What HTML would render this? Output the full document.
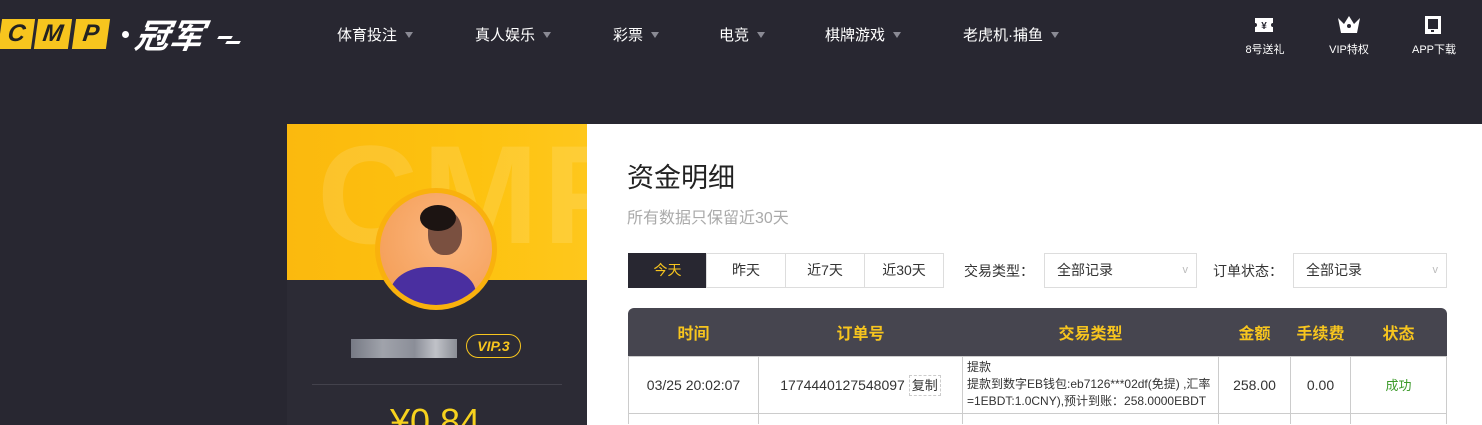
<!DOCTYPE html>
<html><head><meta charset="utf-8"><style>
*{margin:0;padding:0;box-sizing:border-box}
html,body{width:1482px;height:425px;overflow:hidden}
body{background:#282731;font-family:"Liberation Sans","Noto Sans CJK SC",sans-serif;position:relative}
.a{position:absolute}
.nav{color:#fff;font-size:15px;top:24px;white-space:nowrap}
.nav i{display:inline-block;width:0;height:0;border-left:4px solid transparent;border-right:4px solid transparent;border-top:6px solid #8a8a94;margin-left:8px;vertical-align:2px}
.ic{color:#fff;font-size:11px;top:41px;text-align:center;width:60px}
.tab{top:253px;height:35px;border:1px solid #ddd;background:#fff;font-size:14px;color:#333;text-align:center;line-height:33px}
.sel{top:253px;height:35px;border:1px solid #ddd;font-size:14px;color:#333;line-height:33px;padding-left:12px}
.sel:after{content:"v";position:absolute;right:8px;color:#bbb;font-size:11px}
table{position:absolute;left:628px;top:308px;width:819px;border-collapse:collapse;font-size:14px;color:#333}
th{color:#f7c51e;height:48px;font-size:16px;font-weight:bold}
td{border:1px solid #ccc;text-align:center;height:57px}
.clip{position:absolute;left:0;top:0;width:1482px;height:425px;overflow:hidden}
</style></head><body><div class="clip">
<div class="a" style="left:0;top:19px;width:33px;height:30px;background:#f7c51e;transform:skewX(-8deg);font:italic bold 24px 'Liberation Sans';color:#222;text-align:center;line-height:30px">C</div>
<div class="a" style="left:36px;top:19px;width:34px;height:30px;background:#f7c51e;transform:skewX(-8deg);font:italic bold 24px 'Liberation Sans';color:#222;text-align:center;line-height:30px">M</div>
<div class="a" style="left:74px;top:19px;width:34px;height:30px;background:#f7c51e;transform:skewX(-8deg);font:italic bold 24px 'Liberation Sans';color:#222;text-align:center;line-height:30px">P</div>
<div class="a" style="left:122px;top:31px;width:7px;height:7px;border-radius:50%;background:#fff"></div>
<div class="a" style="left:136px;top:14px;color:#fff;font:italic bold 34px 'Noto Sans CJK SC',sans-serif;line-height:40px;transform:skewX(-10deg)">冠军</div>
<div class="a" style="left:218px;top:36px;width:14px;height:3px;background:#fff;transform:skewX(-30deg)"></div>
<div class="a" style="left:226px;top:41px;width:14px;height:3px;background:#fff;transform:skewX(-30deg)"></div>
<div class="a nav" style="left:337px">体育投注<i></i></div>
<div class="a nav" style="left:475px">真人娱乐<i></i></div>
<div class="a nav" style="left:613px">彩票<i></i></div>
<div class="a nav" style="left:719px">电竞<i></i></div>
<div class="a nav" style="left:825px">棋牌游戏<i></i></div>
<div class="a nav" style="left:963px">老虎机·捕鱼<i></i></div>
<svg class="a" style="left:1254px;top:16px" width="20" height="18"><path d="M1 2h18v5a2 2 0 0 0 0 4v5H1v-5a2 2 0 0 0 0-4z" fill="#fff"/><text x="10" y="13" font-size="10" text-anchor="middle" fill="#282731" font-weight="bold">¥</text></svg>
<svg class="a" style="left:1336px;top:14px" width="26" height="20"><path d="M2 4l6 6 5-8 5 8 6-6-3 15H5z" fill="#fff"/><circle cx="13" cy="12" r="2" fill="#282731"/></svg>
<svg class="a" style="left:1424px;top:15px" width="18" height="20"><rect x="1" y="1" width="16" height="18" fill="#fff"/><rect x="4" y="4" width="10" height="10" fill="#282731"/><rect x="7" y="15" width="3" height="2" fill="#282731"/></svg>
<div class="a ic" style="left:1235px">8号送礼</div>
<div class="a ic" style="left:1319px">VIP特权</div>
<div class="a ic" style="left:1404px">APP下载</div>

<div class="a" style="left:287px;top:124px;width:300px;height:156px;background:linear-gradient(90deg,#fbb90e,#fdc20f 60%,#fec71c);overflow:hidden"><div style="position:absolute;left:30px;top:-10px;font:bold 140px 'Liberation Sans';color:rgba(255,255,255,.12);letter-spacing:4px">CMP</div></div>
<div class="a" style="left:287px;top:280px;width:300px;height:145px;background:#2c2b35"></div>
<div class="a" style="left:375px;top:188px;width:122px;height:122px;border-radius:50%;background:#f9b10d"></div>
<div class="a" style="left:380px;top:193px;width:112px;height:112px;border-radius:50%;background:radial-gradient(circle at 60% 40%,#fbb67f,#f39a50);overflow:hidden">
<div style="position:absolute;left:48px;top:18px;width:34px;height:44px;border-radius:45%;background:#7a5040"></div>
<div style="position:absolute;left:40px;top:12px;width:36px;height:26px;border-radius:50%;background:#1c1412"></div>
<div style="position:absolute;left:10px;top:74px;width:86px;height:60px;border-radius:45% 45% 0 0;background:#4a2fa0"></div>
</div>
<div class="a" style="left:351px;top:339px;width:106px;height:19px;background:linear-gradient(90deg,#777a85,#a0a3ab 30%,#8b8e98 60%,#c0c2c8 80%,#8a8d95)"></div>
<div class="a" style="left:466px;top:334px;width:55px;height:24px;border:1px solid #f7c51e;border-radius:12px;color:#f7c51e;font:italic bold 14px 'Liberation Sans';text-align:center;line-height:22px">VIP.3</div>
<div class="a" style="left:312px;top:384px;width:250px;height:1px;background:#43424c"></div>
<div class="a" style="left:390px;top:402px;height:23px;overflow:hidden;color:#f7d21e;font-size:36px;line-height:40px">¥0.84</div>

<div class="a" style="left:587px;top:124px;width:895px;height:301px;background:#fff"></div>
<div class="a" style="left:627px;top:156px;font-size:27px;color:#222">资金明细</div>
<div class="a" style="left:627px;top:204px;font-size:16px;color:#aaa">所有数据只保留近30天</div>
<div class="a tab" style="left:628px;width:79px;background:#282731;border-color:#282731;color:#f7c51e">今天</div>
<div class="a tab" style="left:706px;width:80px">昨天</div>
<div class="a tab" style="left:785px;width:80px">近7天</div>
<div class="a tab" style="left:864px;width:80px">近30天</div>
<div class="a" style="left:964px;top:261px;font-size:14px;color:#333">交易类型：</div>
<div class="a sel" style="left:1044px;width:153px">全部记录</div>
<div class="a" style="left:1213px;top:261px;font-size:14px;color:#333">订单状态：</div>
<div class="a sel" style="left:1293px;width:154px">全部记录</div>
<div class="a" style="left:628px;top:308px;width:819px;height:48px;background:#46454f;border-radius:6px 6px 0 0"></div>
<table>
<tr><th style="width:130px">时间</th><th style="width:204px">订单号</th><th style="width:256px">交易类型</th><th style="width:72px">金额</th><th style="width:60px">手续费</th><th>状态</th></tr>
<tr><td>03/25 20:02:07</td><td>1774440127548097 <span style="border:1px dashed #ccc;padding:2px 2px;font-size:13px">复制</span></td><td style="text-align:left;font-size:12px;line-height:17px;padding-left:4px">提款<br>提款到数字EB钱包:eb7126***02df(免提) ,汇率<br>=1EBDT:1.0CNY),预计到账：258.0000EBDT</td><td>258.00</td><td>0.00</td><td style="color:#3c9a2a;font-size:13px">成功</td></tr>
<tr><td style="height:11px;border-bottom:none"></td><td style="height:11px;border-bottom:none"></td><td style="height:11px;border-bottom:none"></td><td style="height:11px;border-bottom:none"></td><td style="height:11px;border-bottom:none"></td><td style="height:11px;border-bottom:none"></td></tr>
</table>
</div></body></html>
